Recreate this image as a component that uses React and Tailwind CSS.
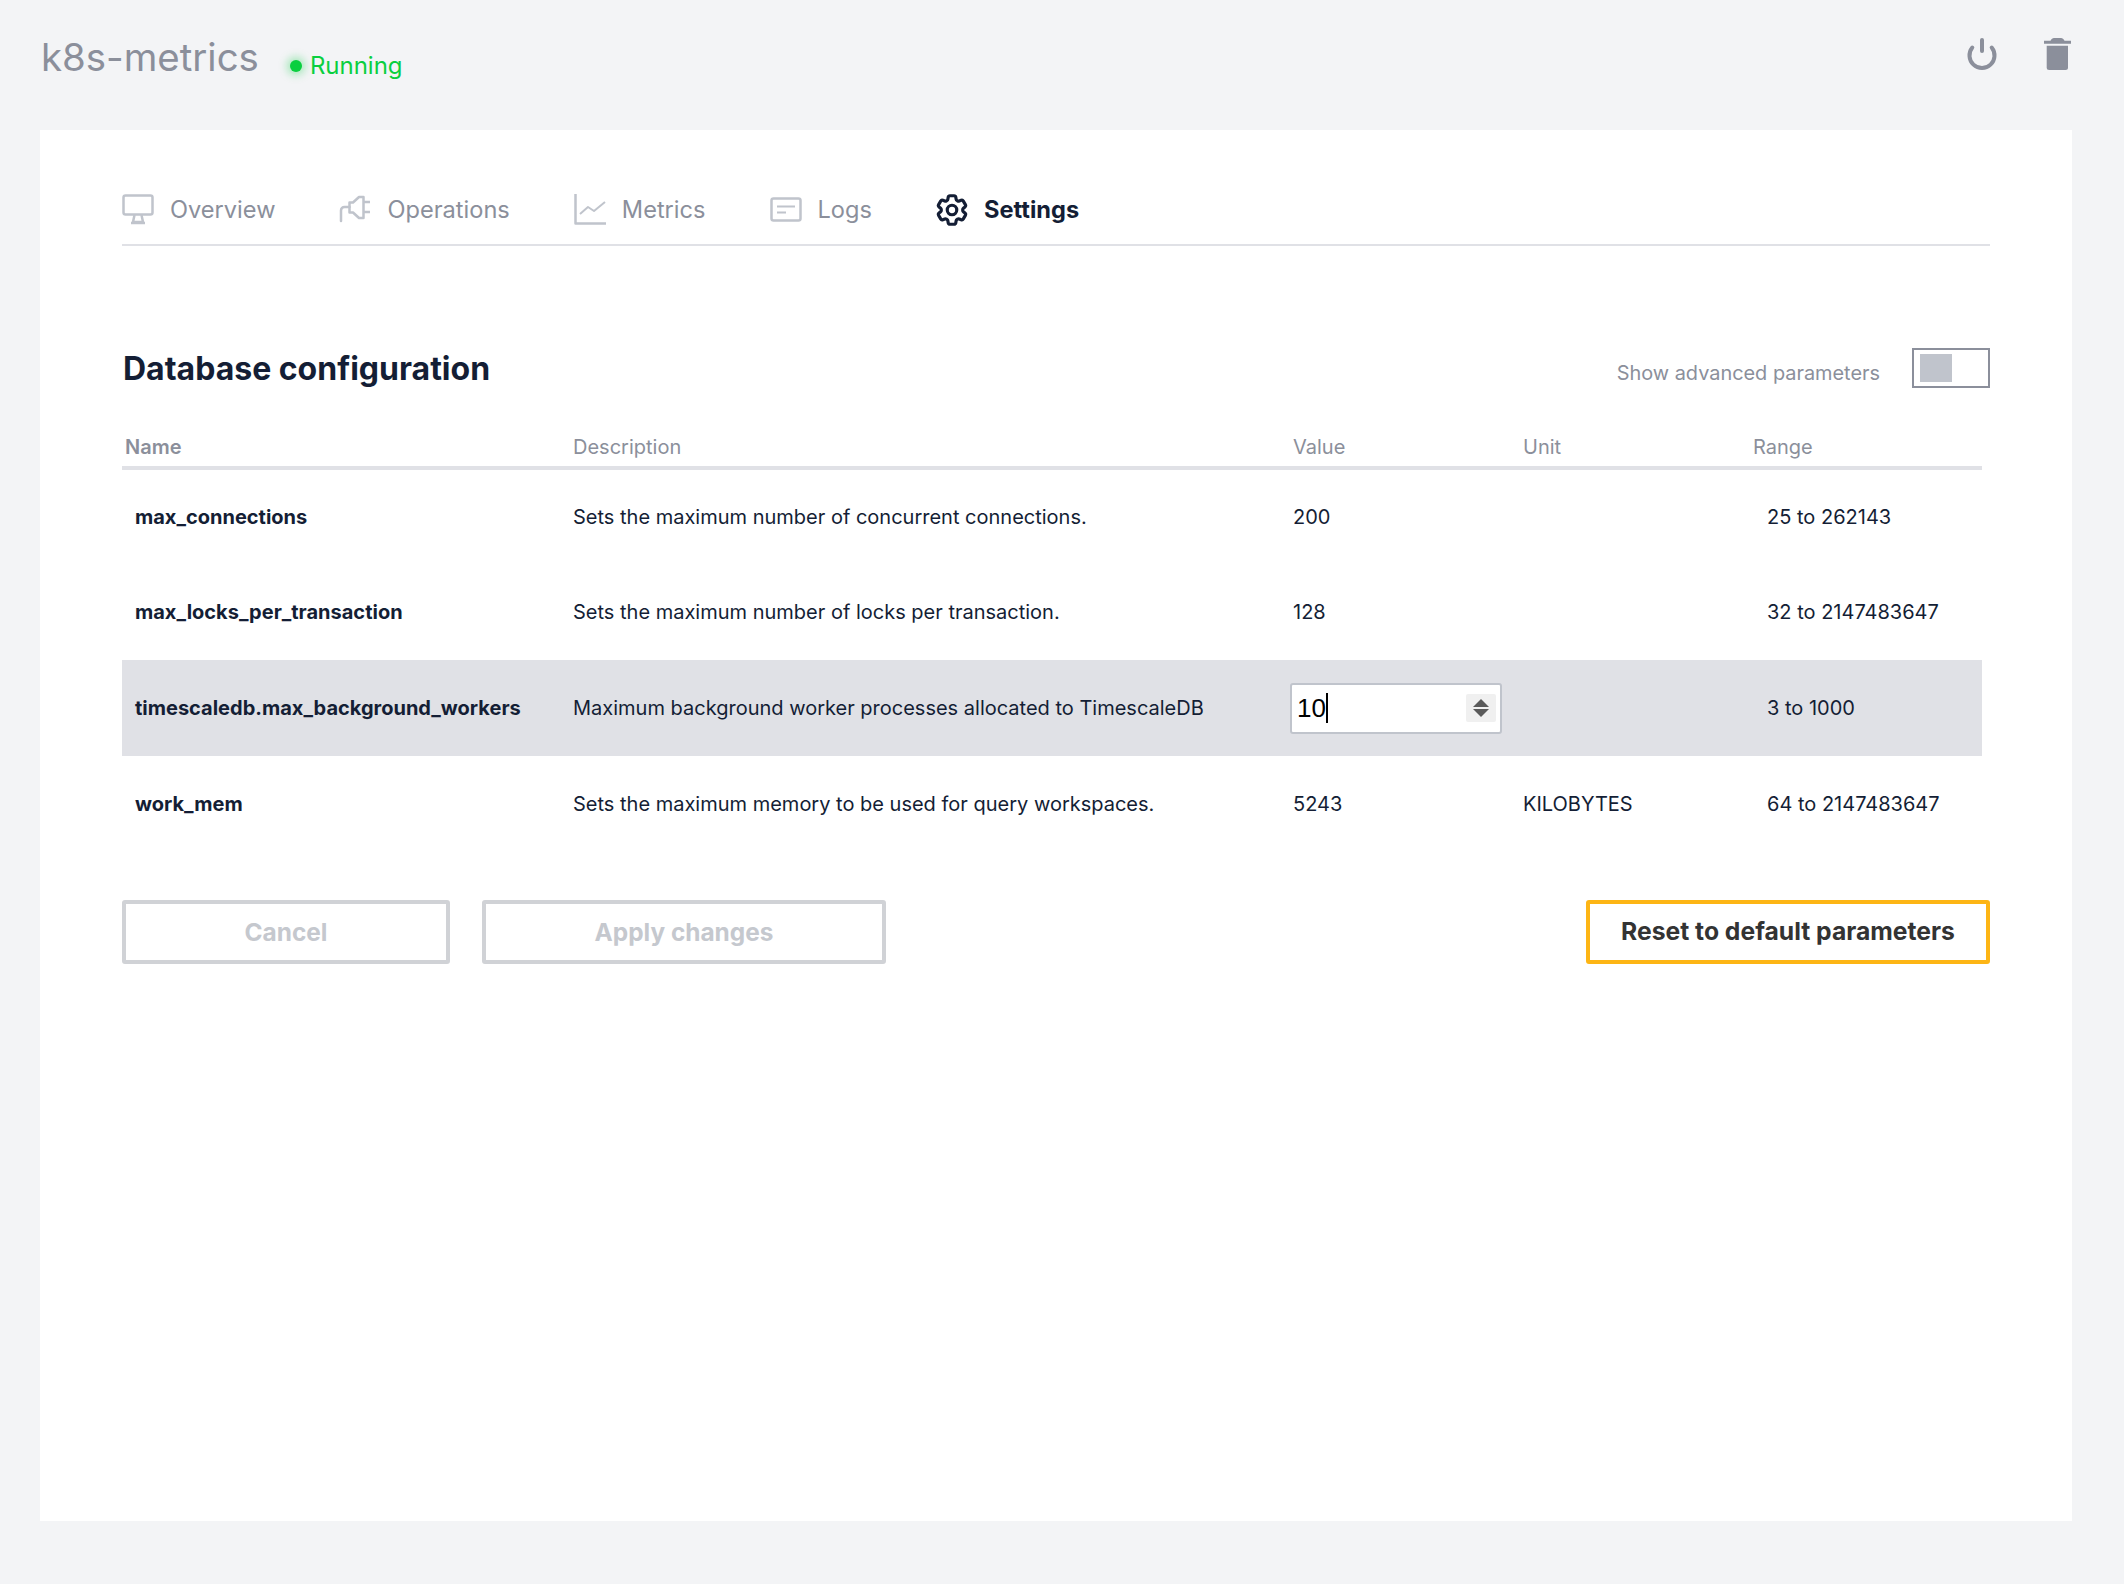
import React from 'react'
import { HiOutlineCog6Tooth } from 'react-icons/hi2'

const MonitorIcon = () => (
  <svg viewBox="0 0 32 32" className="w-8 h-8" fill="none" stroke="#c0c4cc" strokeWidth="2.5" strokeLinejoin="round">
    <rect x="1.5" y="1.5" width="29" height="19" rx="2" />
    <path d="M12.5 21l-1.5 7h10l-1.5-7" />
    <path d="M9 29h14" />
  </svg>
)

const PlugIcon = () => (
  <svg viewBox="0 0 32 32" className="w-8 h-8" fill="none" stroke="#c0c4cc" strokeWidth="2.5" strokeLinecap="round" strokeLinejoin="round">
    <path d="M2 27V16.500c0-2 1.500-3.500 3.500-3.500h5" />
    <path d="M10.500 8.500H14L20 3h4.500v21H20l-6-5.500h-3.500z" />
    <path d="M25 8h6M25 18h6" strokeLinecap="butt" />
  </svg>
)

const ChartIcon = () => (
  <svg viewBox="0 0 32 32" className="w-8 h-8" fill="none" stroke="#c0c4cc" strokeWidth="2.5" strokeLinejoin="round">
    <path d="M1.500 0v29.500H32" />
    <path d="M6 20l8-7 6 4 11-9" strokeWidth="2" />
  </svg>
)

const LogsIcon = () => (
  <svg viewBox="0 0 32 32" className="w-8 h-8" fill="none" stroke="#c0c4cc" strokeWidth="2.5">
    <rect x="1.500" y="4.500" width="29" height="22" rx="2" />
    <path d="M7 12.500h18M7 18.500h9" strokeWidth="2" />
  </svg>
)

const tabs = [
  { label: 'Overview', icon: <MonitorIcon /> },
  { label: 'Operations', icon: <PlugIcon /> },
  { label: 'Metrics', icon: <ChartIcon /> },
  { label: 'Logs', icon: <LogsIcon /> },
]

const rows = [
  { name: 'max_connections', desc: 'Sets the maximum number of concurrent connections.', value: '200', unit: '', range: '25 to 262143' },
  { name: 'max_locks_per_transaction', desc: 'Sets the maximum number of locks per transaction.', value: '128', unit: '', range: '32 to 2147483647' },
  { name: 'timescaledb.max_background_workers', desc: 'Maximum background worker processes allocated to TimescaleDB', value: '10', unit: '', range: '3 to 1000', editing: true },
  { name: 'work_mem', desc: 'Sets the maximum memory to be used for query workspaces.', value: '5243', unit: 'KILOBYTES', range: '64 to 2147483647' },
]

const ValueInput = ({ value }) => (
  <div className="flex items-center justify-between w-[212px] h-[51px] -ml-[3px] pl-[5px] pr-[4px] bg-white border-2 border-[#c0c4cc] rounded-[3px]">
    <div className="flex items-center font-['Liberation_Sans',sans-serif] text-[26px] text-black">
      {value}
      <span className="w-[2px] h-[30px] bg-black"></span>
    </div>
    <div className="flex flex-col items-center justify-center gap-[2px] w-[30px] h-[28px] bg-[#f0f0f0] rounded-[2px]">
      <span className="w-0 h-0 border-x-[8px] border-x-transparent border-b-[8px] border-b-[#5a5a5a]"></span>
      <span className="w-0 h-0 border-x-[8px] border-x-transparent border-t-[8px] border-t-[#5a5a5a]"></span>
    </div>
  </div>
)

const App = () => {
  return (
    <div className="min-h-screen bg-[#f3f4f6] font-[Inter,sans-serif] pl-10 pr-[52px] pb-[63px] flex flex-col">
      <div className="flex items-start justify-between h-[130px]">
        <div className="flex items-center pt-[32px] pl-px">
          <h1 className="text-[38.4px] leading-[50px] text-[#8b8f9b]">k8s-metrics</h1>
          <span className="ml-[31px] mt-[18px] w-3 h-3 rounded-full bg-[#0acf3f] shadow-[0_0_8px_3px_rgba(10,207,63,0.35)]"></span>
          <span className="ml-[8px] mt-[18px] text-[24px] leading-8 text-[#0acf3f]">Running</span>
        </div>
        <div className="flex items-start gap-[47px] pt-[38px] pr-px">
          <svg viewBox="0 0 30 32" className="w-[30px] h-[32px]" fill="none" stroke="#8b8f9b" strokeWidth="4" strokeLinecap="round">
            <path d="M15 2v11" />
            <path d="M5.300 9.600a12.500 12.500 0 1 0 19.400 0" />
          </svg>
          <svg viewBox="0 0 27 32" className="w-[27px] h-[32px]" fill="#8b8f9b">
            <path d="M0 2.700h6.500C7.500 1 8.500 0 10 0h7c1.500 0 2.500 1 3.500 2.700H27v3H0z" />
            <path d="M2.700 7.700H24V29.500a2.500 2.500 0 0 1-2.500 2.500H5.200a2.500 2.500 0 0 1-2.500-2.500z" />
          </svg>
        </div>
      </div>

      <div className="flex-1 bg-white px-[82px]">
        <div className="flex items-center gap-16 h-[116px] pt-[46px] border-b-2 border-[#e0e1e6]">
          {tabs.map((tab) => (
            <div key={tab.label} className="flex items-center gap-4 text-[23.6px] text-[#8b8f9b]">
              {tab.icon}
              <span>{tab.label}</span>
            </div>
          ))}
          <div className="flex items-center gap-4 text-[23.6px] font-bold text-[#141e35]">
            <HiOutlineCog6Tooth className="w-[38px] h-[38px] -mx-[3px] [&_path]:[stroke-width:2]" />
            <span>Settings</span>
          </div>
        </div>

        <div className="flex items-center justify-between mt-[101px] h-[42px]">
          <h2 className="text-[32px] font-bold text-[#141e35] pt-[2px] pl-px">Database configuration</h2>
          <div className="flex items-center gap-[32px]">
            <span className="text-[19.9px] text-[#8b8f9b] mt-[12px]">Show advanced parameters</span>
            <div className="w-[78px] h-[40px] border-2 border-[#8b8f9b] pl-[6px] pt-[4px]">
              <div className="w-8 h-7 bg-[#c0c4cc]"></div>
            </div>
          </div>
        </div>

        <table className="table-fixed w-[1860px] mt-[39px] text-[20px] text-left">
          <thead>
            <tr className="h-[40px] border-b-4 border-[#e0e1e6] text-[#8b8f9b]">
              <th className="w-[451px] pl-[3px] font-semibold">Name</th>
              <th className="w-[720px] font-normal">Description</th>
              <th className="w-[230px] font-normal">Value</th>
              <th className="w-[230px] font-normal">Unit</th>
              <th className="font-normal">Range</th>
            </tr>
          </thead>
          <tbody className="text-[#141e35]">
            {rows.map((row) => (
              <tr key={row.name} className={row.editing ? 'h-[96px] bg-[#e0e1e6]' : 'h-[96px]'}>
                <td className="pl-[13px] font-bold">{row.name}</td>
                <td>{row.desc}</td>
                <td>{row.editing ? <ValueInput value={row.value} /> : row.value}</td>
                <td>{row.unit}</td>
                <td className="pl-[14px]">{row.range}</td>
              </tr>
            ))}
          </tbody>
        </table>

        <div className="flex items-center mt-[48px]">
          <button className="w-[328px] h-[64px] border-4 border-[#d0d2d6] rounded-[3px] text-[24.4px] font-bold text-[#c5c8ce]">Cancel</button>
          <button className="w-[404px] h-[64px] ml-[32px] border-4 border-[#d0d2d6] rounded-[3px] text-[24.4px] font-bold text-[#c5c8ce]">Apply changes</button>
          <button className="w-[404px] h-[64px] ml-auto border-4 border-[#fdb515] rounded-[3px] text-[24.7px] font-bold text-[#333333]">Reset to default parameters</button>
        </div>
      </div>
    </div>
  )
}

export default App
